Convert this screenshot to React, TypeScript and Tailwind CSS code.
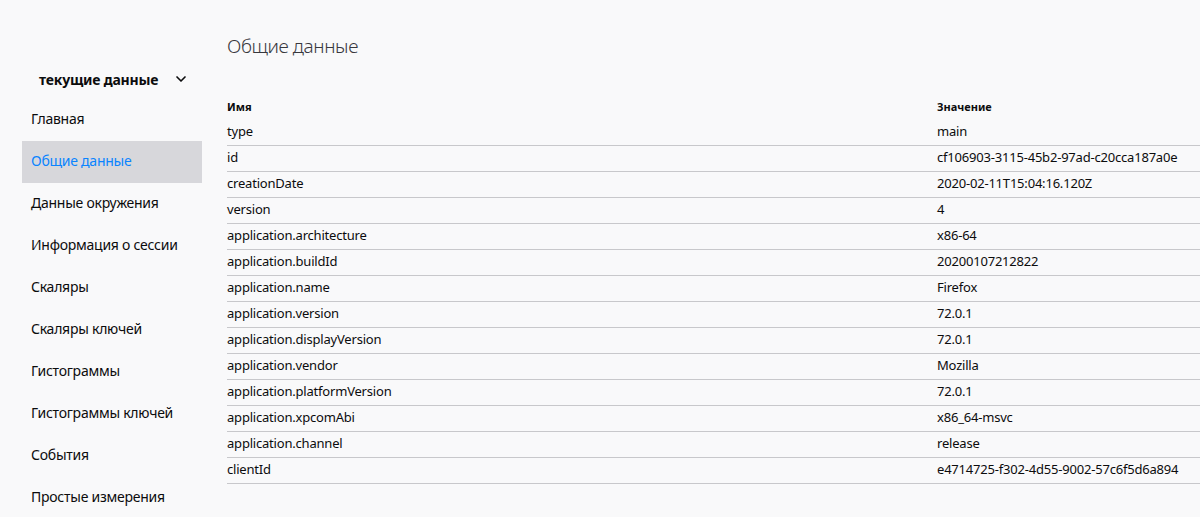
import { ChevronDown } from 'lucide-react';

const menu = [
  'Главная',
  'Общие данные',
  'Данные окружения',
  'Информация о сессии',
  'Скаляры',
  'Скаляры ключей',
  'Гистограммы',
  'Гистограммы ключей',
  'События',
  'Простые измерения',
];

const rows: [string, string][] = [
  ['type', 'main'],
  ['id', 'cf106903-3115-45b2-97ad-c20cca187a0e'],
  ['creationDate', '2020-02-11T15:04:16.120Z'],
  ['version', '4'],
  ['application.architecture', 'x86-64'],
  ['application.buildId', '20200107212822'],
  ['application.name', 'Firefox'],
  ['application.version', '72.0.1'],
  ['application.displayVersion', '72.0.1'],
  ['application.vendor', 'Mozilla'],
  ['application.platformVersion', '72.0.1'],
  ['application.xpcomAbi', 'x86_64-msvc'],
  ['application.channel', 'release'],
  ['clientId', 'e4714725-f302-4d55-9002-57c6f5d6a894'],
];

export default function App() {
  return (
    <div
      className="flex h-[517px] w-[1200px] overflow-hidden bg-[#f9f9fa] text-[#0c0c0d]"
      style={{ fontFamily: '"Noto Sans", "Open Sans", sans-serif' }}
    >
      {/* sidebar */}
      <aside className="w-[202px] shrink-0 pl-[22px] pt-[66px]">
        <div className="flex h-[26px] items-center pl-[17px]">
          <span className="w-[134px] text-[14px] font-bold tracking-[-0.2px]">текущие данные</span>
          <ChevronDown className="h-[16px] w-[16px]" strokeWidth={2.5} />
        </div>
        <nav className="mt-[7px] flex flex-col">
          {menu.map((m) => (
            <div
              key={m}
              className={`flex h-[42px] items-center pb-[4px] pl-[9px] text-[14px] tracking-[-0.25px] ${
                m === 'Общие данные' ? 'bg-[#d7d7db] text-[#0a84ff]' : ''
              }`}
            >
              {m}
            </div>
          ))}
        </nav>
      </aside>

      {/* main */}
      <main className="flex-1 pl-[25px] pt-[33px]">
        <h1 className="text-[19px] font-light leading-[26px] tracking-[-0.4px] text-[#38383d]">Общие данные</h1>
        <table className="mt-[34px] w-[1000px] border-collapse text-[13px]">
          <thead>
            <tr className="h-[26px]">
              <th className="w-[710px] p-0 pt-[2px] text-left align-middle text-[11px] font-bold">Имя</th>
              <th className="p-0 pt-[2px] text-left align-middle text-[11px] font-bold">Значение</th>
            </tr>
          </thead>
          <tbody>
            {rows.map(([k, v]) => (
              <tr key={k} className="h-[26px] border-b border-[#c8c8cb]">
                <td className="p-0 align-middle tracking-[-0.2px]">{k}</td>
                <td className="p-0 align-middle tracking-[-0.2px]">{v}</td>
              </tr>
            ))}
          </tbody>
        </table>
      </main>
    </div>
  );
}
